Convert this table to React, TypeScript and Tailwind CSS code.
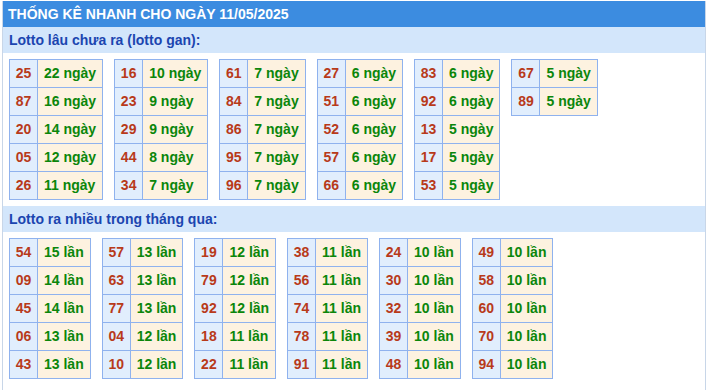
const gan: [string, number][][] = [
  [["25", 22], ["87", 16], ["20", 14], ["05", 12], ["26", 11]],
  [["16", 10], ["23", 9], ["29", 9], ["44", 8], ["34", 7]],
  [["61", 7], ["84", 7], ["86", 7], ["95", 7], ["96", 7]],
  [["27", 6], ["51", 6], ["52", 6], ["57", 6], ["66", 6]],
  [["83", 6], ["92", 6], ["13", 5], ["17", 5], ["53", 5]],
  [["67", 5], ["89", 5]],
]

const nhieu: [string, number][][] = [
  [["54", 15], ["09", 14], ["45", 14], ["06", 13], ["43", 13]],
  [["57", 13], ["63", 13], ["77", 13], ["04", 12], ["10", 12]],
  [["19", 12], ["79", 12], ["92", 12], ["18", 11], ["22", 11]],
  [["38", 11], ["56", 11], ["74", 11], ["78", 11], ["91", 11]],
  [["24", 10], ["30", 10], ["32", 10], ["39", 10], ["48", 10]],
  [["49", 10], ["58", 10], ["60", 10], ["70", 10], ["94", 10]],
]

function StatTable({ rows, unit }: { rows: [string, number][]; unit: string }) {
  return (
    <div className="grid grid-cols-[auto_auto] self-start border-l border-t border-[#8fb2ee]">
      {rows.map(([num, n]) => (
        <div key={num} className="contents">
          <div className="flex h-[28px] w-[28px] items-center justify-center border-b border-r border-[#8fb2ee] bg-[#e1eefd] text-[#b83a1a]">
            {num}
          </div>
          <div className="flex h-[28px] items-center border-b border-r border-[#8fb2ee] bg-[#fdf2e0] px-[6px] text-[#0b860b]">
            {n} {unit}
          </div>
        </div>
      ))}
    </div>
  )
}

function Section({ title, data, unit }: { title: string; data: [string, number][][]; unit: string }) {
  return (
    <>
      <div className="flex h-[26px] items-center bg-[#d3e6fb] px-[6px] text-[14px] font-bold text-[#1b45b0]">
        {title}
      </div>
      <div className="flex gap-x-[11px] px-[6px] py-[6px] text-[14px] font-bold">
        {data.map((rows, i) => (
          <StatTable key={i} rows={rows} unit={unit} />
        ))}
      </div>
    </>
  )
}

export default function App() {
  return (
    <div className="h-[390px] w-[709px] overflow-hidden bg-white pt-[1px] font-['Liberation_Sans',Arial,sans-serif]">
      <div className="ml-[2px] h-full w-[704px] border-x border-[#c8d6e8]">
        <div className="flex h-[26px] items-center bg-[#3c8ce0] px-[5px] text-[14px] font-bold uppercase text-white">
          Thống kê nhanh cho ngày 11/05/2025
        </div>
        <Section title="Lotto lâu chưa ra (lotto gan):" data={gan} unit="ngày" />
        <Section title="Lotto ra nhiều trong tháng qua:" data={nhieu} unit="lần" />
      </div>
    </div>
  )
}
